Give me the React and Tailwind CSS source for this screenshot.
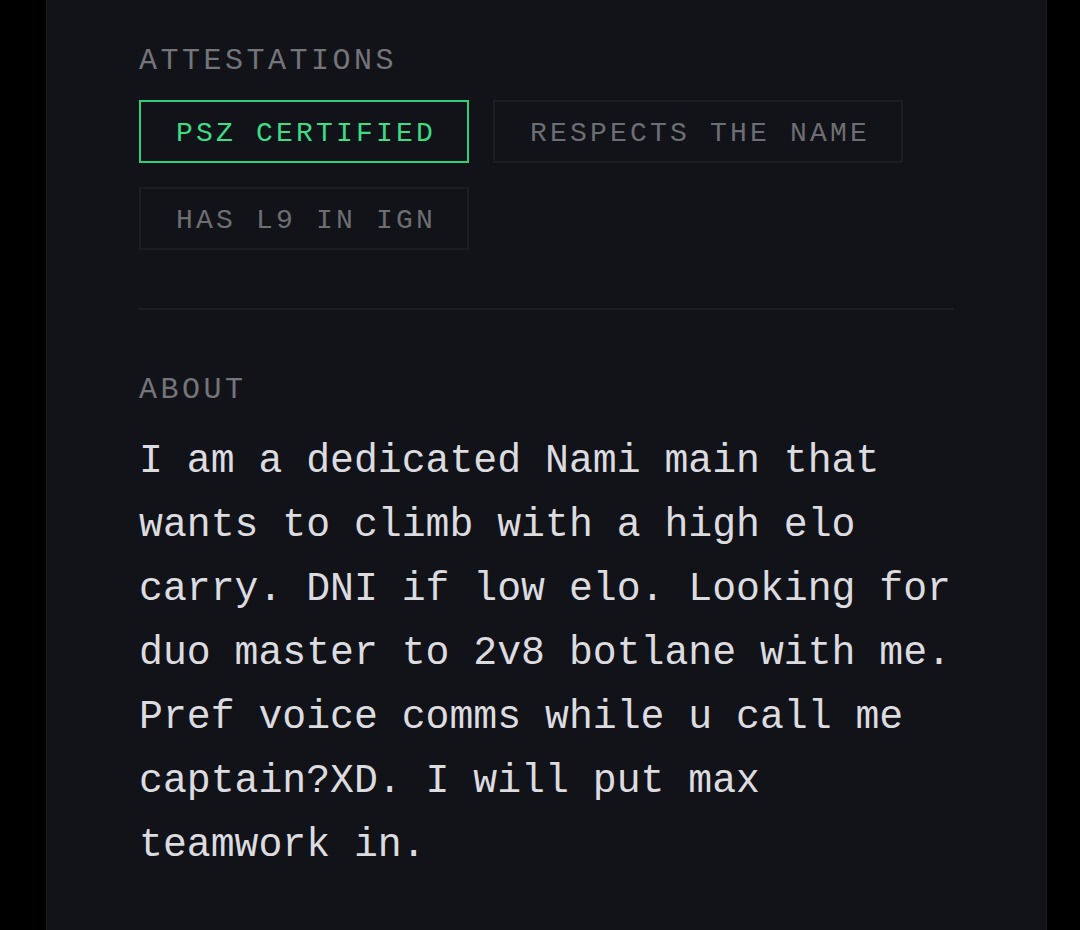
export default function App() {
  const badges = [
    { label: "PSZ CERTIFIED", active: true },
    { label: "RESPECTS THE NAME", active: false },
    { label: "HAS L9 IN IGN", active: false },
  ];
  return (
    <div className="min-h-screen bg-black font-['Liberation_Mono','DejaVu_Sans_Mono',monospace]">
      <div className="ml-[46px] w-[1001px] min-h-[930px] bg-[#121318] border-x border-[#1d1e24] px-[92px] pt-[46px]">
        <div className="text-[30px] leading-none tracking-[3.5px] text-[#74757a]">ATTESTATIONS</div>
        <div className="mt-[24px] flex flex-wrap gap-x-[24px] gap-y-[24px]">
          {badges.map((b) => (
            <div
              key={b.label}
              className={
                b.active
                  ? "h-[63px] flex items-center pt-[5px] pl-[35px] pr-[31px] border-2 border-[#2fcf7a] text-[#3ddc86] text-[28px] leading-none tracking-[3.2px]"
                  : "h-[63px] flex items-center pt-[5px] pl-[35px] pr-[31px] border-2 border-[#1c1d23] text-[#6d6e73] text-[28px] leading-none tracking-[3.2px]"
              }
            >
              {b.label}
            </div>
          ))}
        </div>
        <div className="mt-[58px] h-[2px] bg-[#1d1e24]" />
        <div className="mt-[65px] text-[30px] leading-none tracking-[3.5px] text-[#74757a]">ABOUT</div>
        <p className="mt-[25px] text-[39.8px] leading-[64px] text-[#dcdce0]">
          I am a dedicated Nami main that wants to climb with a high elo carry. DNI if low elo. Looking for duo master to 2v8 botlane with me. Pref voice comms while u call me captain?XD. I will put max teamwork in.
        </p>
      </div>
    </div>
  );
}
